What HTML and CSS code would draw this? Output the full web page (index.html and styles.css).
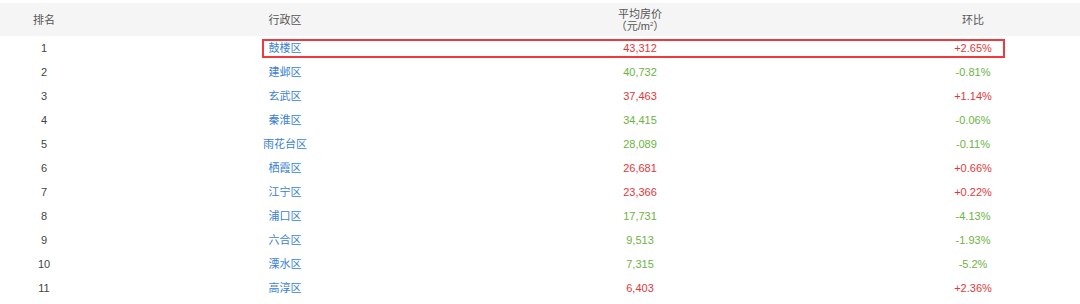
FILE: index.html
```html
<!DOCTYPE html>
<html lang="zh">
<head>
<meta charset="utf-8">
<link rel="stylesheet" href="styles.css">
</head>
<body>
<div class="table">
  <div class="row head">
    <div class="cell">排名</div>
    <div class="cell">行政区</div>
    <div class="cell two"><span>平均房价</span><span>（元/m<sup>2</sup>）</span></div>
    <div class="cell">环比</div>
  </div>
  <div class="body">
    <div class="highlight"></div>
    <div class="row"><div class="cell">1</div><div class="cell link">鼓楼区</div><div class="cell up">43,312</div><div class="cell up">+2.65%</div></div>
    <div class="row"><div class="cell">2</div><div class="cell link">建邺区</div><div class="cell down">40,732</div><div class="cell down">-0.81%</div></div>
    <div class="row"><div class="cell">3</div><div class="cell link">玄武区</div><div class="cell up">37,463</div><div class="cell up">+1.14%</div></div>
    <div class="row"><div class="cell">4</div><div class="cell link">秦淮区</div><div class="cell down">34,415</div><div class="cell down">-0.06%</div></div>
    <div class="row"><div class="cell">5</div><div class="cell link">雨花台区</div><div class="cell down">28,089</div><div class="cell down">-0.11%</div></div>
    <div class="row"><div class="cell">6</div><div class="cell link">栖霞区</div><div class="cell up">26,681</div><div class="cell up">+0.66%</div></div>
    <div class="row"><div class="cell">7</div><div class="cell link">江宁区</div><div class="cell up">23,366</div><div class="cell up">+0.22%</div></div>
    <div class="row"><div class="cell">8</div><div class="cell link">浦口区</div><div class="cell down">17,731</div><div class="cell down">-4.13%</div></div>
    <div class="row"><div class="cell">9</div><div class="cell link">六合区</div><div class="cell down">9,513</div><div class="cell down">-1.93%</div></div>
    <div class="row"><div class="cell">10</div><div class="cell link">溧水区</div><div class="cell down">7,315</div><div class="cell down">-5.2%</div></div>
    <div class="row"><div class="cell">11</div><div class="cell link">高淳区</div><div class="cell up">6,403</div><div class="cell up">+2.36%</div></div>
  </div>
</div>
</body>
</html>
```
FILE: styles.css
```css
html, body {
  margin: 0;
  padding: 0;
  background: #fff;
  overflow: hidden;
}
body {
  font-family: "Liberation Sans", Arial, "Noto Sans CJK SC", sans-serif;
  font-size: 11px;
  color: #444;
  padding-top: 3px;
}
.table {
  width: 1080px;
}
.row {
  display: grid;
  grid-template-columns: 88px 394px 316px 1fr;
  height: 24px;
  align-items: center;
}
.row > .cell:nth-child(4) {
  padding-left: 68px;
}
.head {
  height: 33px;
  background: #f5f5f5;
  color: #555;
}
.cell {
  text-align: center;
  line-height: 12px;
}
.two {
  display: flex;
  flex-direction: column;
  align-items: center;
}
.two span { line-height: 12px; }
sup {
  font-size: 6px;
  line-height: 0;
  vertical-align: 4px;
}
.body {
  position: relative;
}
.highlight {
  position: absolute;
  left: 262px;
  top: 3px;
  width: 739px;
  height: 15px;
  border: 2px solid #f0393c;
  pointer-events: none;
}
.link { color: #3a7fd4; }
.up { color: #e2383a; }
.down { color: #6db33f; }
```
